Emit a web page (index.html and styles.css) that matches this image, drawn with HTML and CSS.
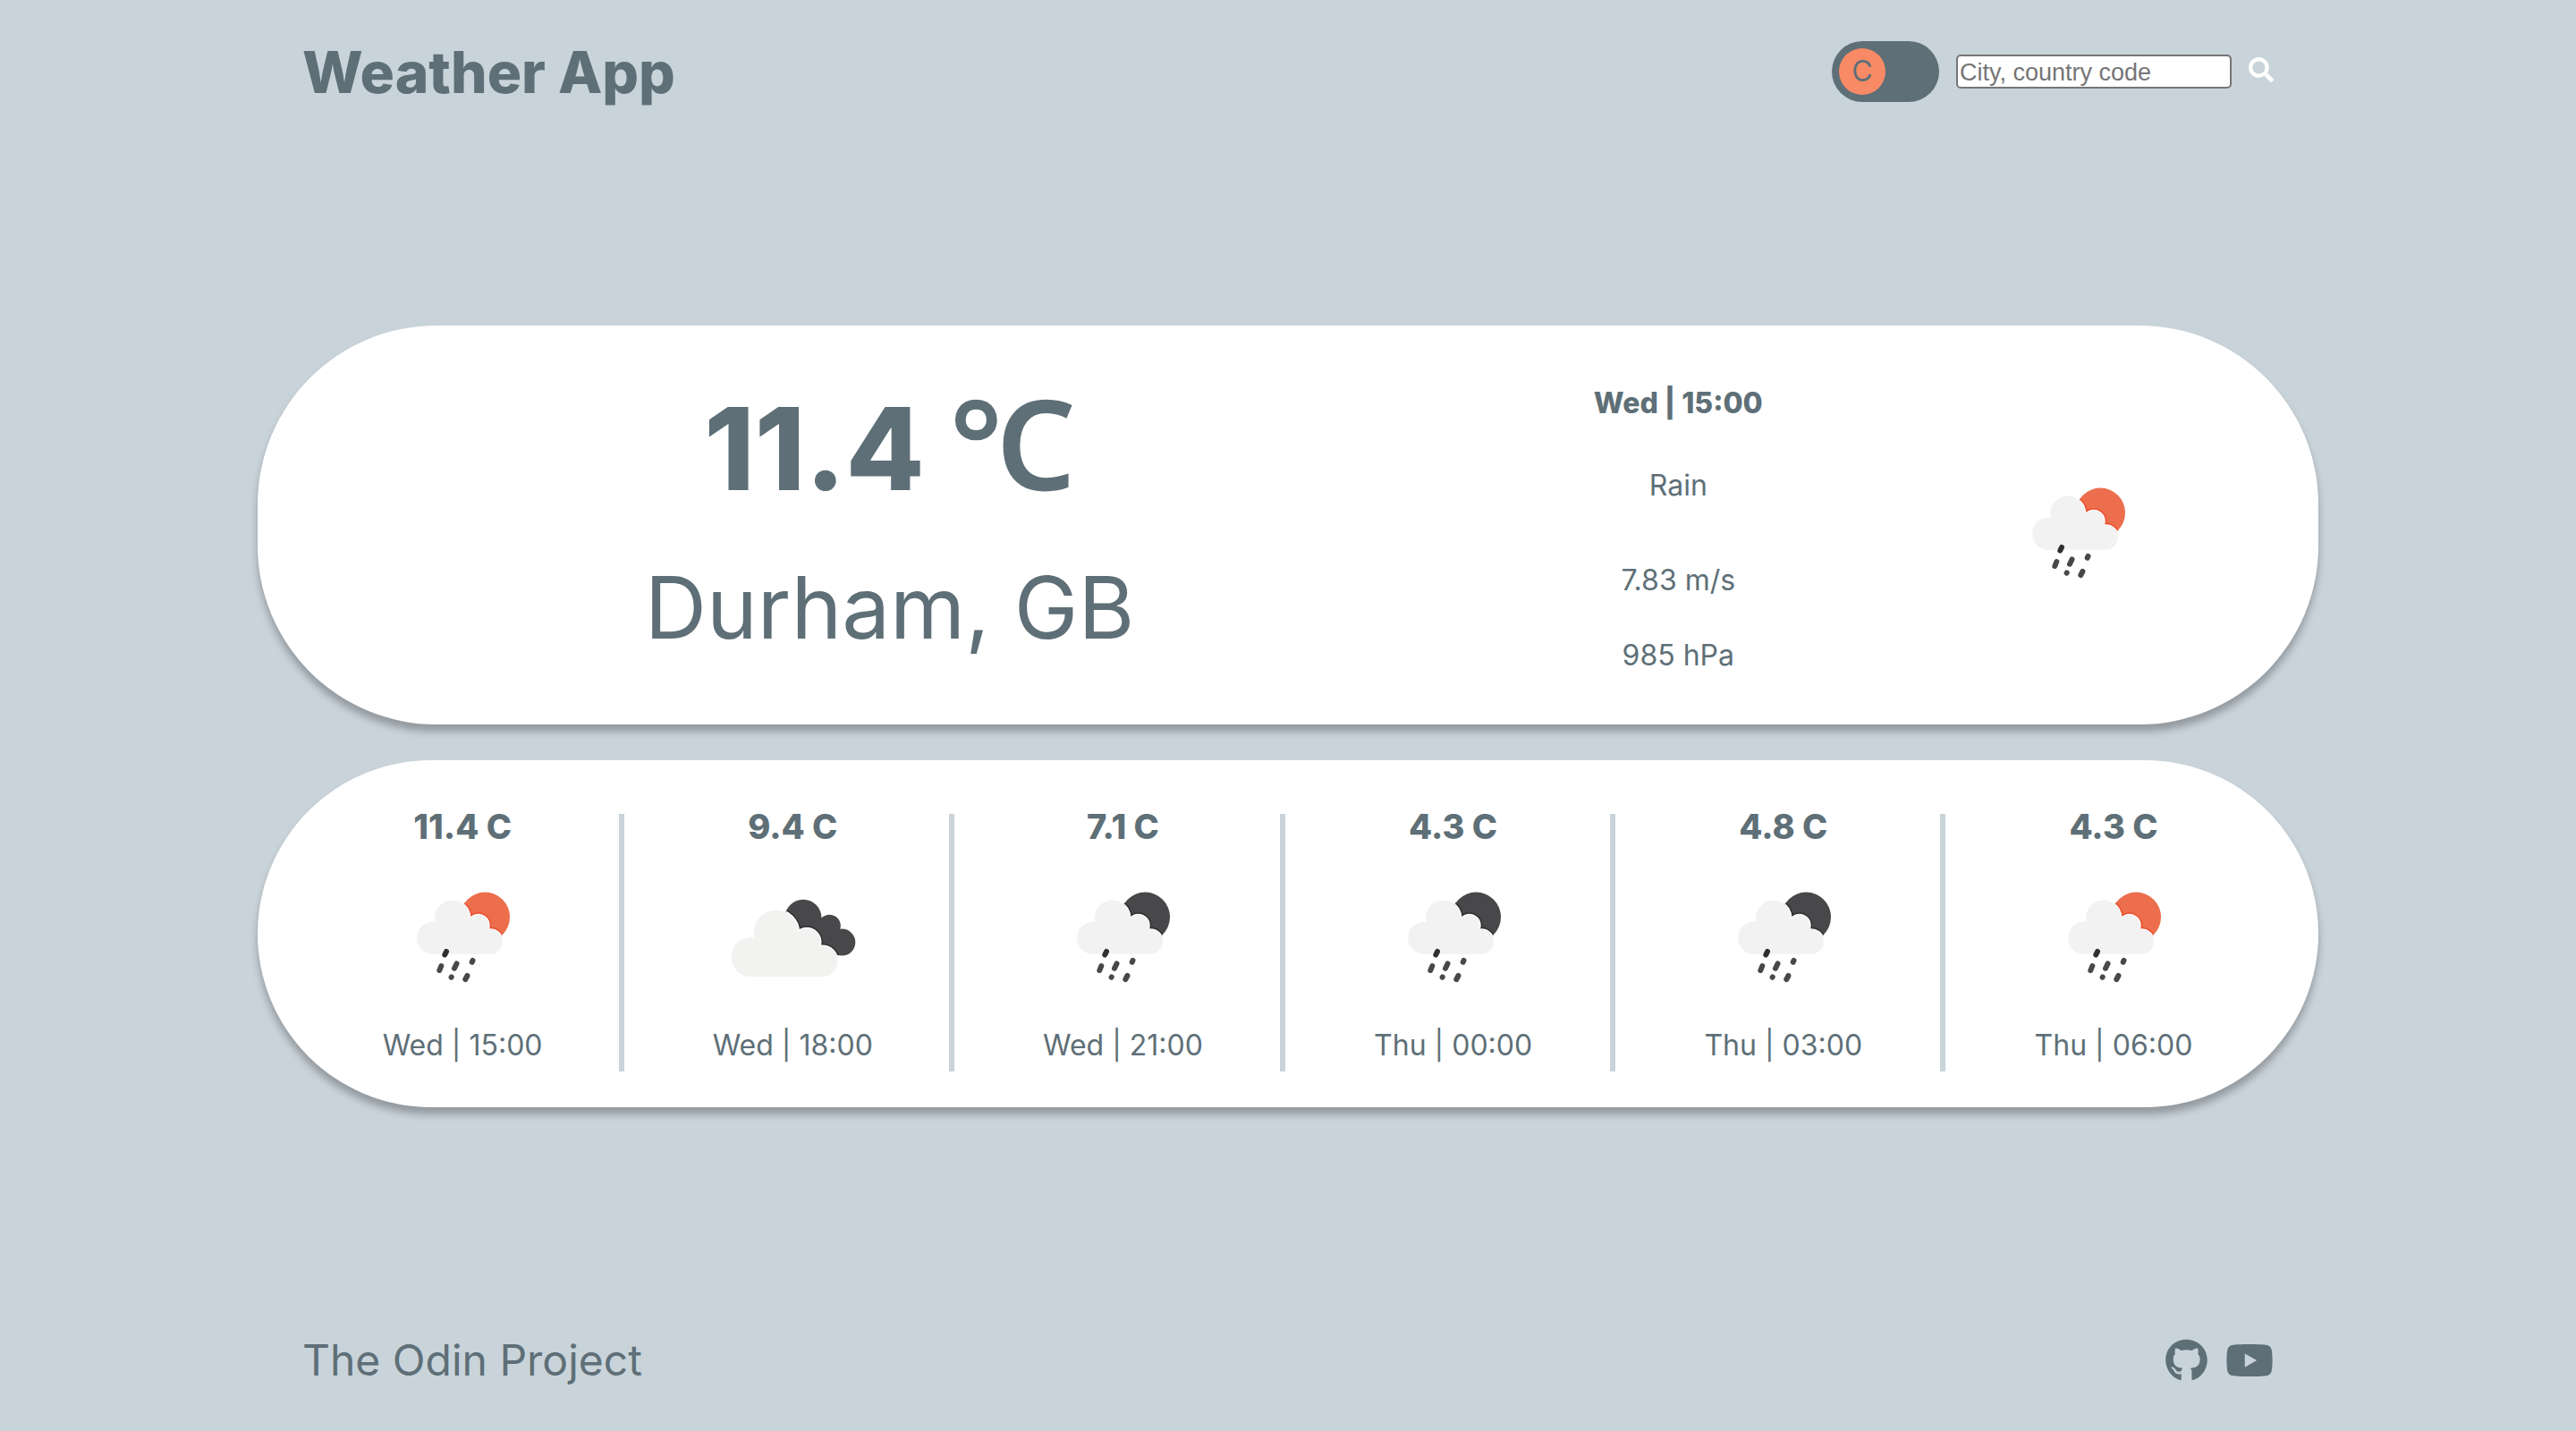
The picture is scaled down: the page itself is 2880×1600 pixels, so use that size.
FILE: index.html
```html
<!DOCTYPE html>
<html lang="en">
<head>
<meta charset="utf-8">
<meta name="viewport" content="width=device-width, initial-scale=1">
<title>Weather App</title>
<link rel="stylesheet" href="styles.css">
</head>
<body>
<svg class="sprite" aria-hidden="true">
  <defs>
    <clipPath id="disc"><circle cx="124.3" cy="77.3" r="27.7"/></clipPath>
    <g id="cloud">
      <circle cx="87.7" cy="78.3" r="19.7"/>
      <circle cx="66.3" cy="100.7" r="18.2"/>
      <circle cx="116.7" cy="86.7" r="12"/>
      <circle cx="130.3" cy="105" r="13.7"/>
      <path d="M66 88H104L128 92V118.7H66Z"/>
    </g>
    <g id="drops" stroke-width="6" stroke-linecap="round">
      <path d="M81 116L79.300 119.500" stroke="#2f2f31"/>
      <path d="M75.300 132L73.300 137M92.500 129.500L90 134.700M110.500 125.900L109.700 127.700M86.600 144.700L86.700 144.500M104.400 143L102.300 147" stroke="#48484a"/>
    </g>
    <g id="bigcloud">
      <circle cx="81.700" cy="94.700" r="25"/>
      <circle cx="53.700" cy="121.900" r="22"/>
      <circle cx="116" cy="105.300" r="15"/>
      <circle cx="133.300" cy="127" r="17"/>
      <path d="M53 106H104L131 112V144H53Z"/>
    </g>
    <clipPath id="backshape">
      <circle cx="112" cy="78.300" r="20.500"/>
      <circle cx="141.300" cy="87.200" r="12.500"/>
      <circle cx="155.300" cy="105.600" r="15"/>
      <path d="M112 78L132 79L150 92L155 120L130 114L105 96Z"/>
    </clipPath>
    <symbol id="rain-day" viewBox="-1 0 200 200">
      <g clip-path="url(#disc)">
        <rect width="200" height="200" fill="#ec6e4c"/>
        <use href="#cloud" stroke="#e9502f" stroke-width="5"/>
        <use href="#cloud" stroke="#fff" stroke-width="2"/>
      </g>
      <use href="#cloud" fill="#f2f2f2"/>
      <use href="#drops"/>
    </symbol>
    <symbol id="rain-night" viewBox="-1 0 200 200">
      <g clip-path="url(#disc)">
        <rect width="200" height="200" fill="#48484a"/>
        <use href="#cloud" stroke="#303032" stroke-width="5"/>
        <use href="#cloud" stroke="#fff" stroke-width="2"/>
      </g>
      <use href="#cloud" fill="#f2f2f2"/>
      <use href="#drops"/>
    </symbol>
    <symbol id="clouds" viewBox="0 0 200 200">
      <g clip-path="url(#backshape)">
        <rect width="200" height="200" fill="#48484a"/>
        <use href="#bigcloud" stroke="#303032" stroke-width="6"/>
        <use href="#bigcloud" stroke="#fff" stroke-width="3"/>
      </g>
      <use href="#bigcloud" fill="#f2f2f0"/>
    </symbol>
  </defs>
</svg>

<header class="header">
  <h1 class="title">Weather App</h1>
  <form class="controls">
    <label class="toggle">
      <input class="toggle-input" type="checkbox" role="switch" aria-label="Temperature unit">
      <span class="toggle-knob">C</span>
    </label>
    <input class="search-input" type="text" placeholder="City, country code" aria-label="City, country code">
    <button class="search-button" type="button" aria-label="Search">
      <svg viewBox="0 0 512 512" width="28" height="28" fill="currentColor"><path d="M505 442.7L405.300 343c-4.500-4.500-10.600-7-17-7H372c27.600-35.300 44-79.700 44-128C416 93.100 322.900 0 208 0S0 93.100 0 208s93.100 208 208 208c48.300 0 92.700-16.400 128-44v16.300c0 6.400 2.500 12.500 7 17l99.700 99.700c9.400 9.400 24.600 9.400 33.900 0l28.300-28.300c9.400-9.400 9.400-24.600.1-34zM208 336c-70.700 0-128-57.200-128-128 0-70.700 57.200-128 128-128 70.700 0 128 57.200 128 128 0 70.700-57.200 128-128 128z"/></svg>
    </button>
  </form>
</header>

<main class="main">
  <section class="card current">
    <div class="current-place">
      <p class="current-temp">11.4 <span class="unit">℃</span></p>
      <h2 class="current-city">Durham, GB</h2>
    </div>
    <div class="current-details">
      <h3 class="current-time">Wed | 15:00</h3>
      <p class="current-sky">Rain</p>
      <p class="current-wind">7.83 m/s</p>
      <p class="current-pressure">985 hPa</p>
    </div>
    <svg class="icon current-icon" role="img" aria-label="Rain"><use href="#rain-day"/></svg>
  </section>

  <section class="card forecast">
    <article class="slot">
      <h3 class="slot-temp">11.4 C</h3>
      <svg class="icon" aria-hidden="true"><use href="#rain-day"/></svg>
      <p class="slot-time">Wed | 15:00</p>
    </article>
    <article class="slot">
      <h3 class="slot-temp">9.4 C</h3>
      <svg class="icon" aria-hidden="true"><use href="#clouds"/></svg>
      <p class="slot-time">Wed | 18:00</p>
    </article>
    <article class="slot">
      <h3 class="slot-temp">7.1 C</h3>
      <svg class="icon" aria-hidden="true"><use href="#rain-night"/></svg>
      <p class="slot-time">Wed | 21:00</p>
    </article>
    <article class="slot">
      <h3 class="slot-temp">4.3 C</h3>
      <svg class="icon" aria-hidden="true"><use href="#rain-night"/></svg>
      <p class="slot-time">Thu | 00:00</p>
    </article>
    <article class="slot">
      <h3 class="slot-temp">4.8 C</h3>
      <svg class="icon" aria-hidden="true"><use href="#rain-night"/></svg>
      <p class="slot-time">Thu | 03:00</p>
    </article>
    <article class="slot">
      <h3 class="slot-temp">4.3 C</h3>
      <svg class="icon" aria-hidden="true"><use href="#rain-day"/></svg>
      <p class="slot-time">Thu | 06:00</p>
    </article>
  </section>
</main>

<footer class="footer">
  <p>The Odin Project</p>
  <nav class="social">
    <a href="#github" aria-label="GitHub"><svg viewBox="0 0 496 512" width="47" height="48" fill="currentColor"><path d="M165.900 397.400c0 2-2.300 3.600-5.200 3.600-3.300.3-5.600-1.300-5.600-3.600 0-2 2.300-3.600 5.200-3.600 3-.3 5.600 1.300 5.600 3.600zm-31.100-4.500c-.7 2 1.300 4.300 4.300 4.900 2.600 1 5.600 0 6.200-2s-1.300-4.300-4.300-5.200c-2.600-.7-5.500.3-6.200 2.300zm44.200-1.700c-2.900.7-4.900 2.600-4.600 4.900.3 2 2.900 3.300 5.900 2.600 2.900-.7 4.900-2.600 4.600-4.600-.3-1.900-3-3.200-5.900-2.900zM244.800 8C106.100 8 0 113.300 0 252c0 110.900 69.800 205.800 169.500 239.200 12.800 2.300 17.300-5.600 17.300-12.100 0-6.200-.3-40.400-.3-61.400 0 0-70 15-84.700-29.800 0 0-11.400-29.100-27.800-36.600 0 0-22.900-15.700 1.600-15.400 0 0 24.900 2 38.600 25.800 21.900 38.600 58.600 27.500 72.900 20.900 2.300-16 8.800-27.100 16-33.700-55.900-6.200-112.300-14.300-112.300-110.500 0-27.500 7.600-41.300 23.600-58.900-2.600-6.500-11.100-33.300 2.600-67.900 20.900-6.500 69 27 69 27 20-5.600 41.500-8.500 62.800-8.500s42.800 2.900 62.800 8.500c0 0 48.100-33.600 69-27 13.700 34.700 5.200 61.400 2.600 67.900 16 17.700 25.800 31.500 25.800 58.900 0 96.500-58.900 104.200-114.800 110.500 9.200 7.900 17 22.900 17 46.400 0 33.700-.3 75.400-.3 83.600 0 6.500 4.600 14.400 17.300 12.100C428.200 457.800 496 362.900 496 252 496 113.300 383.500 8 244.800 8z"/></svg></a>
    <a href="#youtube" aria-label="YouTube"><svg viewBox="0 0 576 512" width="54" height="48" fill="currentColor"><path d="M549.655 124.083c-6.281-23.650-24.787-42.276-48.284-48.597C458.781 64 288 64 288 64S117.220 64 74.629 75.486c-23.497 6.322-42.003 24.947-48.284 48.597-11.412 42.867-11.412 132.305-11.412 132.305s0 89.438 11.412 132.305c6.281 23.650 24.787 41.500 48.284 47.821C117.220 448 288 448 288 448s170.780 0 213.371-11.486c23.497-6.321 42.003-24.171 48.284-47.821 11.412-42.867 11.412-132.305 11.412-132.305s0-89.438-11.412-132.305zm-317.510 213.508V175.185l142.739 81.205-142.739 81.201z"/></svg></a>
  </nav>
</footer>
</body>
</html>
```
FILE: styles.css
```css
:root {
  --ink: #5e6f77;
  --sky: #c9d3da;
  --accent: #f98a66;
}

* {
  box-sizing: border-box;
  margin: 0;
}

body {
  display: flex;
  flex-direction: column;
  min-height: 100vh;
  padding: 0 10%;
  background: var(--sky);
  color: var(--ink);
  font-family: Inter, "Noto Sans", sans-serif;
  font-size: 32px;
  line-height: 40px;
}

.sprite {
  position: absolute;
  width: 0;
  height: 0;
}

.header,
.footer {
  display: flex;
  justify-content: space-between;
  align-items: center;
}

.header {
  padding: 39px 50px;
}

.title {
  padding-top: 2px;
  font-size: 64px;
  font-weight: 800;
  line-height: 80px;
}

.controls {
  display: flex;
  align-items: center;
  gap: 19px;
}

.toggle {
  position: relative;
  display: block;
  width: 120px;
  height: 68px;
}

.toggle-input {
  appearance: none;
  display: block;
  width: 100%;
  height: 100%;
  border-radius: 34px;
  background: var(--ink);
}

.toggle-knob {
  position: absolute;
  top: 8px;
  left: 8px;
  width: 52px;
  height: 52px;
  border-radius: 50%;
  background: var(--accent);
  line-height: 52px;
  text-align: center;
}

.search-input {
  width: 308px;
  height: 38px;
  padding: 3px 2px 1px;
  border: 2px solid #767676;
  border-radius: 5px;
  background: #fff;
  font-family: "Liberation Sans", Arial, sans-serif;
  font-size: 27px;
}

.search-input::placeholder {
  color: #757575;
}

.search-button {
  display: flex;
  padding: 0 0 4px;
  border: 0;
  background: none;
  color: #fff;
}

.main {
  display: flex;
  flex: 1;
  flex-direction: column;
  justify-content: center;
  gap: 40px;
}

.card {
  border-radius: 200px;
  background: #fff;
  box-shadow: 0 8px 8px rgba(0, 0, 0, 0.27);
  text-align: center;
}

.current {
  display: grid;
  grid-template-columns: 59fr 20fr 20fr;
  justify-items: center;
  align-items: start;
  padding: 60px 46px 57px 48px;
}

.current-temp {
  margin-bottom: 41px;
  font-size: 128px;
  font-weight: 800;
  line-height: 156px;
}

.unit {
  font-family: "Noto Sans", sans-serif;
  font-size: 140px;
  font-weight: 600;
  line-height: 1;
}

.current-city {
  font-size: 96px;
  font-weight: 400;
  line-height: 116px;
}

.current-details {
  padding-top: 7px;
}

.current-time {
  margin-bottom: 52px;
  font-size: 32px;
  font-weight: 800;
}

.current-sky {
  margin-bottom: 66px;
}

.current-wind {
  margin-bottom: 44px;
}

.icon {
  display: block;
  width: 200px;
  height: 200px;
}

.current-icon {
  margin-top: 72px;
}

.forecast {
  display: flex;
  gap: 13px;
  padding: 60px 54px 40px;
}

.slot {
  box-sizing: content-box;
  display: flex;
  flex: 1 1 0;
  flex-direction: column;
  align-items: center;
  padding-bottom: 8px;
}

.slot:not(:last-child) {
  border-right: 6px solid var(--sky);
}

.slot-temp {
  margin-bottom: 10px;
  font-size: 38px;
  font-weight: 800;
  line-height: 28px;
}

.slot-time {
  line-height: 42px;
}

.footer {
  padding: 50px;
  font-size: 48px;
  line-height: 58px;
}

.social {
  display: flex;
  gap: 20px;
}

.social a {
  display: flex;
  color: inherit;
}
```
